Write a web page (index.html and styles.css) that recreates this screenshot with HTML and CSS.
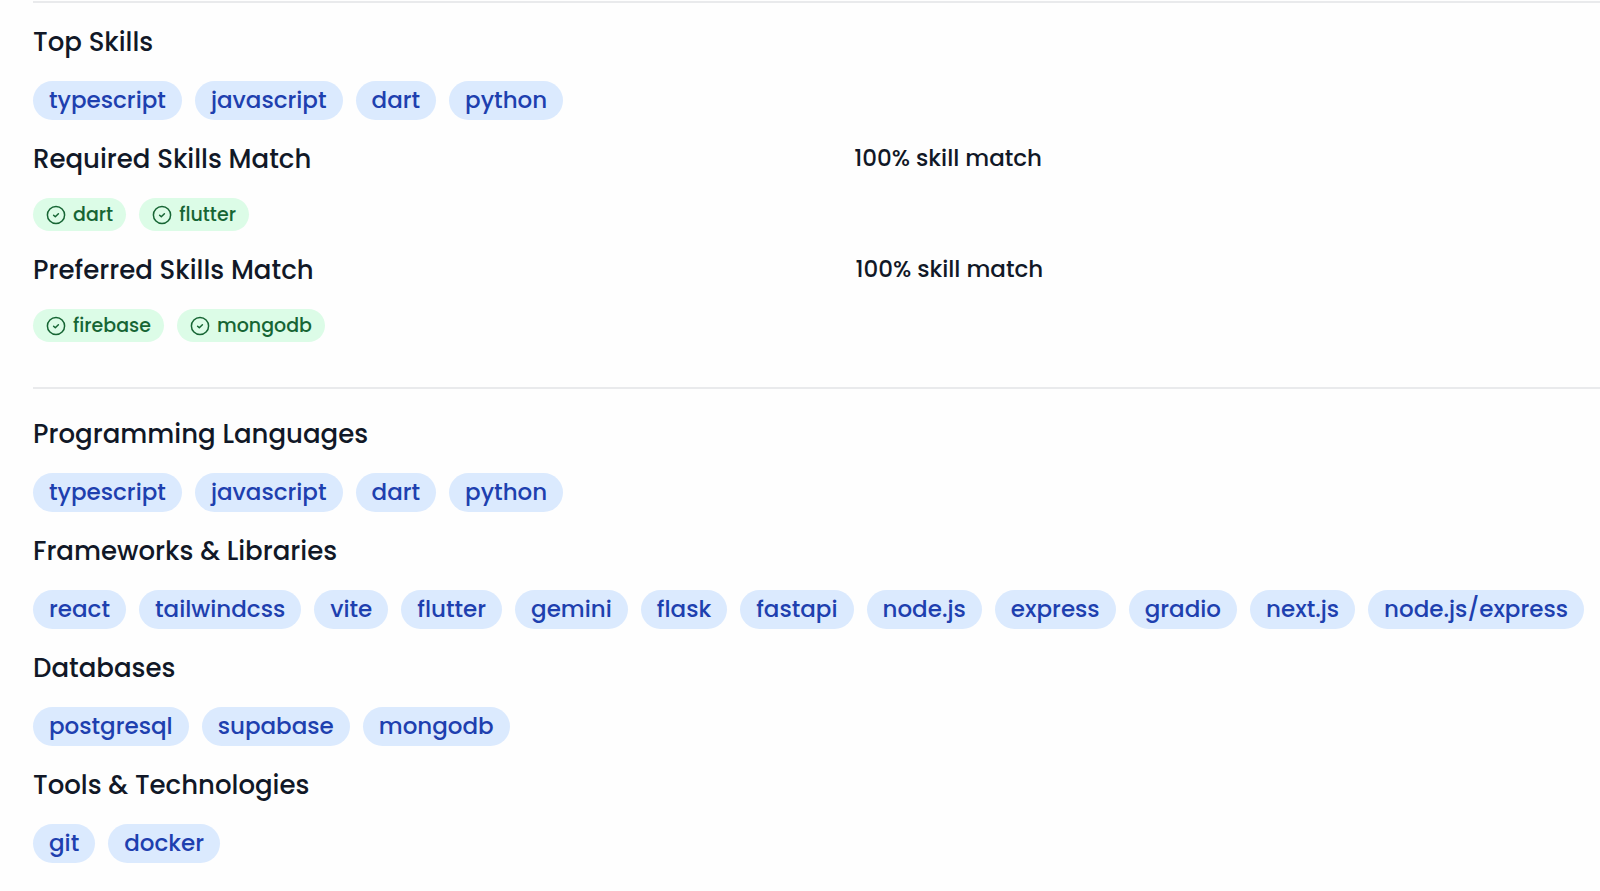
FILE: index.html
```html
<!DOCTYPE html>
<html lang="en">
<head>
<meta charset="utf-8">
<meta name="viewport" content="width=device-width, initial-scale=1">
<title>Skills</title>
<link rel="stylesheet" href="styles.css">
</head>
<body>
<svg class="sprite" aria-hidden="true">
  <symbol id="check" viewBox="0 0 20 20">
    <circle cx="10" cy="10" r="8.6"/>
    <path d="M7.6 10.2l1.7 1.6 3.1-3.1"/>
  </symbol>
</svg>
<main class="skills">
  <section class="panel">
    <div class="group">
      <h2 class="title">Top Skills</h2>
      <ul class="tags"><li class="tag">typescript</li><li class="tag">javascript</li><li class="tag">dart</li><li class="tag">python</li></ul>
    </div>
    <div class="group">
      <div class="heading-row"><h2 class="title">Required Skills Match</h2><p class="score">100% skill match</p><span></span></div>
      <ul class="tags">
        <li class="tag match"><svg class="icon"><use href="#check"/></svg>dart</li>
        <li class="tag match"><svg class="icon"><use href="#check"/></svg>flutter</li>
      </ul>
    </div>
    <div class="group">
      <div class="heading-row"><h2 class="title">Preferred Skills Match</h2><p class="score">100% skill match</p><span></span></div>
      <ul class="tags">
        <li class="tag match"><svg class="icon"><use href="#check"/></svg>firebase</li>
        <li class="tag match"><svg class="icon"><use href="#check"/></svg>mongodb</li>
      </ul>
    </div>
  </section>
  <section class="panel categories">
    <div class="group">
      <h2 class="title">Programming Languages</h2>
      <ul class="tags"><li class="tag">typescript</li><li class="tag">javascript</li><li class="tag">dart</li><li class="tag">python</li></ul>
    </div>
    <div class="group">
      <h2 class="title">Frameworks &amp; Libraries</h2>
      <ul class="tags"><li class="tag">react</li><li class="tag">tailwindcss</li><li class="tag">vite</li><li class="tag">flutter</li><li class="tag">gemini</li><li class="tag">flask</li><li class="tag">fastapi</li><li class="tag">node.js</li><li class="tag">express</li><li class="tag">gradio</li><li class="tag">next.js</li><li class="tag">node.js/express</li></ul>
    </div>
    <div class="group">
      <h2 class="title">Databases</h2>
      <ul class="tags"><li class="tag">postgresql</li><li class="tag">supabase</li><li class="tag">mongodb</li></ul>
    </div>
    <div class="group">
      <h2 class="title">Tools &amp; Technologies</h2>
      <ul class="tags"><li class="tag">git</li><li class="tag">docker</li></ul>
    </div>
  </section>
</main>
</body>
</html>
```
FILE: styles.css
```css
* { box-sizing: border-box; margin: 0; padding: 0; }
body {
  background: #fefefe;
  color: #111827;
  font-family: Poppins, Inter, sans-serif;
  font-weight: 500;
}
.sprite { position: absolute; width: 0; height: 0; }
.skills { padding-left: 33px; padding-top: 1px; }
.panel {
  display: flex;
  flex-direction: column;
  gap: 19px;
  padding: 19px 15px 45px 0;
  border-top: 2px solid #e9eaec;
}
.categories { padding-top: 25px; padding-bottom: 24px; }
.group { display: flex; flex-direction: column; gap: 19px; }
.heading-row { display: flex; justify-content: space-between; align-items: flex-start; }
.title { font-size: 26px; line-height: 40px; font-weight: 500; }
.score { font-size: 23px; line-height: 38px; }
.tags { display: flex; flex-wrap: wrap; gap: 13px; list-style: none; }
.tag {
  display: flex;
  align-items: center;
  padding: 0 16px;
  border-radius: 20px;
  background: #dbeafe;
  color: #1e40af;
  font-size: 23px;
  line-height: 39px;
}
.match {
  gap: 7px;
  padding: 0 13px;
  background: #dcfce7;
  color: #166534;
  font-size: 19px;
  line-height: 33px;
}
.icon {
  width: 20px;
  height: 20px;
  fill: none;
  stroke: currentColor;
  stroke-width: 1.5;
  stroke-linecap: round;
  stroke-linejoin: round;
}
```
